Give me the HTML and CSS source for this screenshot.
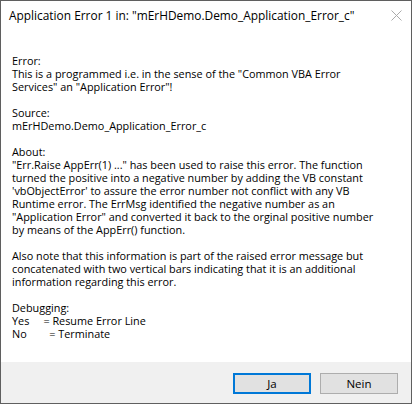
FILE: index.html
```html
<!DOCTYPE html>
<html>
<head>
<meta charset="utf-8">
<link rel="stylesheet" href="styles.css">
</head>
<body>
<div class="dialog">
  <div class="titlebar">
    <span class="title">Application Error 1 in: "mErHDemo.Demo_Application_Error_c"</span>
    <svg class="close" width="11" height="11" viewBox="0 0 11 11"><path d="M0.5 0.5 L10.5 10.5 M10.5 0.5 L0.5 10.5" stroke="#ababab" stroke-width="1" fill="none"/></svg>
  </div>
  <div class="content">
    <p>Error:<br>This is a programmed i.e. in the sense of the "Common VBA Error<br>Services" an "Application Error"!</p>
    <p>Source:<br>mErHDemo.Demo_Application_Error_c</p>
    <p>About:<br>"Err.Raise AppErr(1) ..." has been used to raise this error. The function<br>turned the positive into a negative number by adding the VB constant<br>'vbObjectError' to assure the error number not conflict with any VB<br>Runtime error. The ErrMsg identified the negative number as an<br>"Application Error" and converted it back to the orginal positive number<br>by means of the AppErr() function.</p>
    <p>Also note that this information is part of the raised error message but<br>concatenated with two vertical bars indicating that it is an additional<br>information regarding this error.</p>
    <p class="pre">Debugging:
Yes     = Resume Error Line
No        = Terminate</p>
  </div>
  <div class="footer">
    <button class="btn btn-default">Ja</button>
    <button class="btn">Nein</button>
  </div>
</div>
</body>
</html>
```

FILE: styles.css
```css
html, body {
  margin: 0;
  padding: 0;
  background: #ffffff;
}
body {
  width: 413px;
  height: 406px;
  overflow: hidden;
  font-family: "Open Sans", "Noto Sans", sans-serif;
  color: #000;
}
.dialog {
  box-sizing: border-box;
  width: 412px;
  height: 404px;
  border: 1px solid #5f5f5f;
  display: flex;
  flex-direction: column;
  background: #fff;
}
.titlebar {
  height: 28px;
  display: flex;
  align-items: center;
  justify-content: space-between;
  padding: 0 9px 0 8px;
}
.title {
  font-size: 11.9px;
  white-space: nowrap;
}
.close {
  display: block;
}
.content {
  flex: 1;
  padding: 25px 0 0 11px;
  font-size: 10.85px;
  line-height: 13px;
  white-space: nowrap;
}
.content p {
  margin: 0 0 13px 0;
}
.content .pre {
  white-space: pre;
}
.footer {
  box-sizing: border-box;
  height: 41px;
  background: #f0f0f0;
  display: flex;
  justify-content: flex-end;
  align-items: flex-start;
  gap: 9px;
  padding: 11px 13px 0 0;
}
.btn {
  box-sizing: border-box;
  width: 78px;
  height: 21px;
  border: 1px solid #adadad;
  background: #e1e1e1;
  font-family: "Open Sans", "Noto Sans", sans-serif;
  font-size: 11.5px;
  color: #000;
  padding: 0;
  margin: 0;
}
.btn-default {
  border: 2px solid #0078d7;
}
```
